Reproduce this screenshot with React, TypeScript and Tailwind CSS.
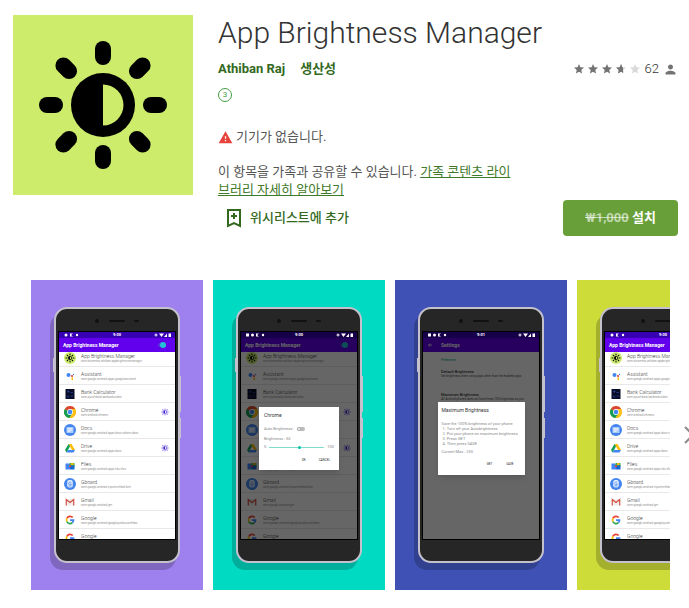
import React from 'react'
import { MdPerson, MdStar, MdWarning } from 'react-icons/md'

const RAYS = [0, 45, 90, 135, 180, 225, 270, 315]

const Sun = ({ className, half }: { className?: string; half: string }) => (
  <svg viewBox="0 0 180 180" className={className} fill="currentColor">
    <circle cx="90" cy="90" r="32" />
    <path d="M90 69.500a20.500 20.500 0 0 1 0 41z" fill={half} />
    {RAYS.map((deg) => (
      <rect key={deg} x="82" y="26" width="16" height="24" rx="8" transform={`rotate(${deg} 90 90)`} />
    ))}
  </svg>
)

const AppIcon = ({ name }: { name: string }) => {
  switch (name) {
    case 'sun':
      return (
        <svg viewBox="0 0 24 24" className="size-3">
          <circle cx="12" cy="12" r="12" fill="#cdec6c" />
          <circle cx="12" cy="12" r="4" />
          <path d="M12 9.500a2.500 2.500 0 0 1 0 5z" fill="#cdec6c" />
          {RAYS.map((deg) => (
            <path key={deg} d="M12 4v2" stroke="#000" strokeWidth="2" strokeLinecap="round" transform={`rotate(${deg} 12 12)`} />
          ))}
        </svg>
      )
    case 'assistant':
      return (
        <svg viewBox="0 0 24 24" className="size-3">
          <circle cx="9" cy="10" r="4" fill="#4285f4" />
          <circle cx="19" cy="9" r="1.300" fill="#4285f4" />
          <circle cx="16" cy="12" r="2.200" fill="#ea4335" />
          <path d="M15 15h3v5h-3z" fill="#fbbc05" />
        </svg>
      )
    case 'bank':
      return (
        <svg viewBox="0 0 24 24" className="size-3">
          <path d="M3 2h18v20H3z" fill="#0a0b25" />
          <path d="M6 7h5M8.500 5v5M13 9h5M6 15l4 4M10 15l-4 4M13 16h5" stroke="#2449a5" strokeWidth="1.500" />
        </svg>
      )
    case 'chrome':
      return (
        <svg viewBox="0 0 24 24" className="size-3">
          <circle cx="12" cy="12" r="12" fill="#fbc116" />
          <path d="M12 12 1.600 6A12 12 0 0 1 22.400 6z" fill="#db4437" />
          <path d="M1.600 6A12 12 0 0 0 11 24l6-9-5-3z" fill="#129b57" />
          <path d="M12 6h10.400A12 12 0 0 1 11 24l6-9z" fill="#fbc116" />
          <circle cx="12" cy="12" r="5.800" fill="#fff" />
          <circle cx="12" cy="12" r="4.500" fill="#4285f4" />
        </svg>
      )
    case 'docs':
      return (
        <svg viewBox="0 0 24 24" className="size-3">
          <circle cx="12" cy="12" r="12" fill="#4384ee" />
          <rect x="5" y="6" width="14" height="12" rx="1" fill="#a9cafa" />
          <path d="M7 9.500h10M7 12h10M7 14.500h6" stroke="#fff" strokeWidth="1.500" />
        </svg>
      )
    case 'drive':
      return (
        <svg viewBox="0 0 24 24" className="size-3">
          <path d="M9 4h6l7 12h-6z" fill="#fbbc05" />
          <path d="m9 4 3 5-7 12-3-5z" fill="#0f9d58" />
          <path d="M8 16h14l-3 5H5z" fill="#4285f4" />
        </svg>
      )
    case 'files':
      return (
        <svg viewBox="0 0 24 24" className="size-3">
          <path d="M3 7h7l2 2v10H3z" fill="#4285f4" />
          <path d="M11 6h10v8H11z" fill="#34a853" />
          <path d="M14 6h5v4h-5z" fill="#fbbc05" />
          <path d="M12 11h9v8h-9z" fill="#1967d2" />
          <path d="M10 11h4v3h-4z" fill="#ea4335" />
        </svg>
      )
    case 'gboard':
      return (
        <svg viewBox="0 0 24 24" className="size-3">
          <circle cx="12" cy="12" r="12" fill="#4384ee" />
          <rect x="6.500" y="4" width="11" height="15" rx="4" fill="#e6effc" />
          <path d="M14.500 9a3 3 0 1 0 .5 3h-3" stroke="#4384ee" strokeWidth="1.500" fill="none" />
          <path d="M9 16h6" stroke="#4384ee" strokeWidth="1.500" />
        </svg>
      )
    case 'gmail':
      return (
        <svg viewBox="0 0 24 24" className="size-3">
          <path d="M4 6h16v13H4z" fill="#eeeeee" />
          <path d="M4.500 19V7l7.500 6 7.500-6v12" stroke="#d54b3d" strokeWidth="2.300" fill="none" />
        </svg>
      )
    default:
      return (
        <svg viewBox="0 0 24 24" className="size-3" fill="none" strokeWidth="3.500">
          <path d="M17.500 7A7 7 0 0 0 5.800 8.800" stroke="#ea4335" />
          <path d="M5.800 8.800a7 7 0 0 0 0 6.600" stroke="#fbbc05" />
          <path d="M5.800 15.400a7 7 0 0 0 11 1.800" stroke="#34a853" />
          <path d="M16.800 17.200a7 7 0 0 0 2.200-5.200h-7" stroke="#4285f4" />
        </svg>
      )
  }
}

const apps = [
  { icon: 'sun', name: 'App Brightness Manager', pkg: 'com.dreamfox.athiban.appbrightnessmanager' },
  { icon: 'assistant', name: 'Assistant', pkg: 'com.google.android.apps.googleassistant' },
  { icon: 'bank', name: 'Bank Calculator', pkg: 'com.ayushibala.bankcalculator' },
  { icon: 'chrome', name: 'Chrome', pkg: 'com.android.chrome', on: true },
  { icon: 'docs', name: 'Docs', pkg: 'com.google.android.apps.docs.editors.docs' },
  { icon: 'drive', name: 'Drive', pkg: 'com.google.android.apps.docs', on: true },
  { icon: 'files', name: 'Files', pkg: 'com.google.android.apps.nbu.files' },
  { icon: 'gboard', name: 'Gboard', pkg: 'com.google.android.inputmethod.latin' },
  { icon: 'gmail', name: 'Gmail', pkg: 'com.google.android.gm' },
  { icon: 'google', name: 'Google', pkg: 'com.google.android.googlequicksearchbox' },
  { icon: 'google', name: 'Google', pkg: 'com.google.android.apps.searchlite' },
]

const StatusBar = ({ time, dark }: { time: string; dark?: boolean }) => (
  <div className={`grid h-[6px] shrink-0 grid-cols-3 items-center px-1 text-[4px] leading-none font-bold text-white ${dark ? 'bg-[#16004a]' : 'bg-[#3700b3]'}`}>
    <svg viewBox="0 0 20 4" className="h-1 w-5" fill="currentColor">
      {dark && <path d="M1 .5h3v3H1z" />}
      <circle cx={dark ? 7.5 : 3} cy="2" r="1.500" />
      <path d={dark ? 'M11 .5h3L12 2l2 1.500h-3z' : 'M7 .5h3L8 2l2 1.500H7z'} />
      <circle cx={dark ? 18 : 14} cy="2" r="1.200" />
    </svg>
    <span className="text-center">{time}</span>
    <svg viewBox="0 0 18 4" className="h-1 w-[18px] justify-self-end" fill="currentColor">
      <circle cx="3" cy="2" r="1" fill="none" stroke="currentColor" />
      <path d="M6 .5h5L8.500 4zM11 4l3-3.500V4zM15.500.5H18V4h-2.500z" />
    </svg>
  </div>
)

const AppList = () => (
  <>
    <div className="z-10 flex h-[14px] shrink-0 items-center justify-between bg-[#6200ee] pr-[9px] pl-1">
      <span className="text-[5px] leading-none font-bold text-white">App Brightness Manager</span>
      <input
        type="checkbox"
        defaultChecked
        aria-label="App Brightness Manager"
        className="flex h-[4px] w-[8px] appearance-none items-center justify-end rounded-full bg-[#4f3fd6] before:size-[6px] before:shrink-0 before:rounded-full before:bg-[#22c1d6]"
      />
    </div>
    <ul className="-mt-[3px] bg-white">
      {apps.map((app, i) => (
        <li key={i} className="flex h-[18px] items-center gap-[5px] border-b border-[#e8e8e8] px-[5px]">
          <AppIcon name={app.icon} />
          <div className="flex-1 pt-px whitespace-nowrap">
            <p className="text-[5px] leading-[6px] font-light text-[#333]">{app.name}</p>
            <p className="text-[3px] leading-[5px] font-light text-[#666]">{app.pkg}</p>
          </div>
          {app.on && <Sun className="size-[10px] text-[#3d18cf]" half="#fff" />}
        </li>
      ))}
    </ul>
  </>
)

const Settings = () => (
  <>
    <div className="flex h-[14px] shrink-0 items-center gap-[9px] bg-[#6200ee] px-[5px] text-white">
      <svg viewBox="0 0 8 8" className="size-1" fill="none" stroke="currentColor" strokeWidth="1.500">
        <path d="M8 4H1M4 1 1 4l3 3" />
      </svg>
      <span className="text-[5px] leading-none font-bold">Settings</span>
    </div>
    <div className="flex flex-1 flex-col bg-white pt-[6px] pr-[6px] pl-[18px] text-[3px] leading-[5px] text-[#555]">
      <p className="text-[#00a98f]">Preference</p>
      <p className="mt-[6px] text-[4px] text-black">Default Brightness</p>
      <p>Set brightness when using apps other than the enabled apps</p>
      <p className="mt-[13px] text-[4px] text-black">Maximum Brightness</p>
      <p>All Android phones does not have linear 100 brightness so you</p>
    </div>
  </>
)

const ChromeDialog = () => (
  <div className="h-[63px] w-[80px] bg-white px-[5px] pt-[5px] text-[4px] leading-[6px] text-[#888] shadow-md">
    <p className="text-[5px] text-[#333]">Chrome</p>
    <label className="mt-[8px] flex items-center gap-1">
      Auto Brightness:
      <input
        type="checkbox"
        className="flex h-[4px] w-[8px] appearance-none items-center rounded-full bg-[#bbb] before:size-[4px] before:rounded-full before:border before:border-[#aaa] before:bg-white"
      />
    </label>
    <p className="mt-[4px]">Brightness : 55</p>
    <div className="mt-[2px] flex items-center gap-[3px]">
      <span>0</span>
      <input
        type="range"
        defaultValue={55}
        aria-label="Brightness"
        className="h-px min-w-0 flex-1 appearance-none bg-[#7fdccd] [&::-webkit-slider-thumb]:size-[3px] [&::-webkit-slider-thumb]:appearance-none [&::-webkit-slider-thumb]:rounded-full [&::-webkit-slider-thumb]:bg-[#03c5a8]"
      />
      <span>100</span>
    </div>
    <div className="mt-[7px] flex justify-end gap-[13px] pr-1 text-[3px] text-[#222]">
      <button type="button">OK</button>
      <button type="button">CANCEL</button>
    </div>
  </div>
)

const MaximumDialog = () => (
  <div className="h-[73px] w-[87px] bg-white px-[4px] pt-[5px] text-[4px] leading-[5px] whitespace-nowrap text-[#888] shadow-md">
    <p className="text-[5px] leading-[6px] text-[#333]">Maximum Brightness</p>
    <p className="mt-[8px]">Save the 100% brightness of your phone</p>
    <ol className="pl-px">
      <li>1. Turn off your Autobrightness</li>
      <li>2. Put your phone on maximum brightness</li>
      <li>3. Press GET</li>
      <li>4. Then press SAVE</li>
    </ol>
    <p className="mt-[3px]">Current Max : 255</p>
    <div className="mt-[8px] flex justify-end gap-[14px] pr-[7px] text-[3px] text-[#222]">
      <button type="button">GET</button>
      <button type="button">SAVE</button>
    </div>
  </div>
)

type PhoneProps = {
  time?: string
  children: React.ReactNode
  dialog?: React.ReactNode
}

const Phone = ({ time = '9:00', children, dialog }: PhoneProps) => (
  <div className="relative flex h-[256px] w-[126px] shrink-0 flex-col rounded-[13px] border-2 border-[#c4c1cc] bg-[#262626] px-[3px] shadow-[-4px_7px_0_rgba(0,0,0,0.2)]">
    <span className="absolute top-[49px] -left-[3px] h-[14px] w-px bg-[#c4c1cc]" />
    <span className="absolute top-[67px] -right-[3px] h-[36px] w-px bg-[#c4c1cc]" />
    <span className="absolute top-[109px] -right-[3px] h-[20px] w-px bg-[#c4c1cc]" />
    <div className="flex h-[23px] shrink-0 items-center pl-[36px]">
      <span className="size-1 rounded-full bg-[#111]" />
      <span className="ml-[10px] h-[2px] w-4 rounded-full bg-[#111]" />
      <span className="ml-[9px] h-[2px] w-[5px] rounded-full bg-[#111]" />
    </div>
    <div className="flex h-[207px] flex-col overflow-hidden outline outline-black">
      <StatusBar time={time} dark={!!dialog} />
      <div className="relative flex flex-1 flex-col overflow-hidden">
        {children}
        {dialog && <div className="absolute inset-0 z-20 flex items-center justify-center bg-black/60">{dialog}</div>}
      </div>
    </div>
  </div>
)

const Gallery = () => (
  <section className="mt-11 flex items-center pl-[31px]">
    <div className="flex min-w-0 flex-1 gap-[10px] overflow-hidden">
      <div className="h-[310px] w-[172px] shrink-0 bg-[#9f80ef] pt-[27px] pl-[23px]">
        <Phone><AppList /></Phone>
      </div>
      <div className="h-[310px] w-[172px] shrink-0 bg-[#00dac3] pt-[27px] pl-[23px]">
        <Phone dialog={<ChromeDialog />}><AppList /></Phone>
      </div>
      <div className="h-[310px] w-[172px] shrink-0 bg-[#3f51b5] pt-[27px] pl-[23px]">
        <Phone time="9:01" dialog={<MaximumDialog />}><Settings /></Phone>
      </div>
      <div className="h-[310px] w-[172px] shrink-0 bg-[#cddc39] pt-[27px] pl-[23px]">
        <Phone><AppList /></Phone>
      </div>
    </div>
    <button type="button" aria-label="다음" className="flex w-[19px] shrink-0 overflow-hidden pl-[14px]">
      <svg viewBox="0 0 12 18" className="h-[18px] w-3 shrink-0" fill="none" stroke="#8c8c8c" strokeWidth="2">
        <path d="m1 1 8 8-8 8" />
      </svg>
    </button>
  </section>
)

const Header = () => (
  <header className="flex gap-[25px] pt-[15px] pr-[11px] pl-[13px]">
    <div className="size-[180px] shrink-0 bg-[#cdec6c]">
      <Sun className="size-full text-black" half="#cdec6c" />
    </div>
    <div className="flex-1">
      <h1 className="text-[30px] leading-9 font-light text-[#333]">App Brightness Manager</h1>
      <div className="mt-2 flex h-5 items-center justify-between">
        <div className="flex gap-[15px] font-bold text-[#33691e]">
          <a href="#developer">Athiban Raj</a>
          <a href="#category">생산성</a>
        </div>
        <div className="flex items-center gap-[2px] text-[#737373]">
          <MdStar size={12} />
          <MdStar size={12} />
          <MdStar size={12} />
          <span className="relative text-[#d9d9d9]">
            <MdStar size={12} />
            <span className="absolute inset-y-0 left-0 w-2 overflow-hidden text-[#737373]">
              <MdStar size={12} />
            </span>
          </span>
          <MdStar size={12} className="text-[#d9d9d9]" />
          <span className="ml-[2px] font-light text-[#333]">62</span>
          <MdPerson size={15} className="ml-[2px]" />
        </div>
      </div>
      <div className="mt-[9px] flex size-[14px] items-center justify-center rounded-full border border-[#43a047] text-[8px] leading-none text-[#43a047]">3</div>
      <p className="mt-[26px] flex items-center gap-[3px]">
        <MdWarning size={15} className="text-[#e5433c]" />
        기기가 없습니다.
      </p>
      <p className="mt-[17px] w-[295px]">
        이 항목을 가족과 공유할 수 있습니다.{' '}
        <a href="#family" className="text-[#3f7a2a] underline">가족 콘텐츠 라이브러리 자세히 알아보기</a>
      </p>
      <div className="mt-px flex items-center justify-between">
        <button type="button" className="flex items-center gap-1 pl-1 font-medium text-[#33691e]">
          <svg viewBox="0 0 24 24" className="size-6" fill="none" stroke="currentColor" strokeWidth="2">
            <path d="M6 4h12v16l-6-3-6 3zM12 7v6M9 10h6" />
          </svg>
          위시리스트에 추가
        </button>
        <button type="button" className="h-9 w-[115px] rounded bg-[#689f38] font-bold text-white">
          <s className="text-white/60">₩1,000</s> 설치
        </button>
      </div>
    </div>
  </header>
)

const App = () => {
  return (
    <main className="overflow-hidden bg-white pb-[18px] font-[Roboto,'Noto_Sans_CJK_KR',sans-serif] text-[13px] leading-[18px] text-[#555]">
      <Header />
      <Gallery />
    </main>
  )
}

export default App
